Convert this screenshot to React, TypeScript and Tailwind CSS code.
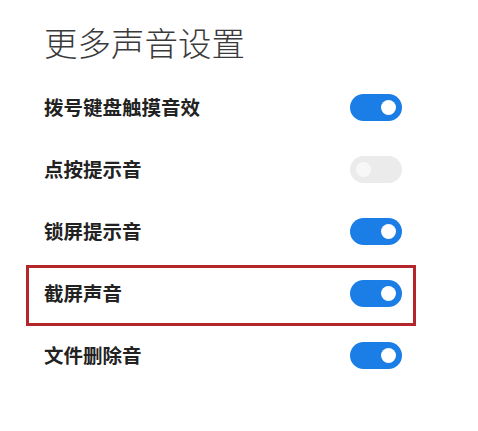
const rows = [
  { label: "拨号键盘触摸音效", on: true },
  { label: "点按提示音", on: false },
  { label: "锁屏提示音", on: true },
  { label: "截屏声音", on: true, marked: true },
  { label: "文件删除音", on: true },
];

function Toggle({ on }: { on: boolean }) {
  return (
    <div
      className={
        on
          ? "flex h-[27px] w-[52px] items-center justify-end rounded-full bg-[#1a7ee6] px-[6px]"
          : "flex h-[27px] w-[52px] items-center justify-start rounded-full bg-[#ebebeb] px-[6px]"
      }
    >
      <div className={on ? "h-[15px] w-[15px] rounded-full bg-white" : "h-[15px] w-[15px] rounded-full bg-[#f7f7f7]"} />
    </div>
  );
}

export default function App() {
  return (
    <div
      className="h-[431px] w-[478px] bg-white pl-[44px] pr-[76px] pt-[22px]"
      style={{ fontFamily: '"Noto Sans CJK SC", "Noto Sans", sans-serif' }}
    >
      <h1 className="h-[54px] text-[33.5px] font-light leading-[40px] text-[#3a3a3a]">更多声音设置</h1>
      <div className="flex flex-col">
        {rows.map((r) => (
          <div key={r.label} className="relative flex h-[62px] items-center justify-between">
            <span className="text-[19.5px] font-bold text-[#222]">{r.label}</span>
            <Toggle on={r.on} />
            {r.marked && (
              <div className="pointer-events-none absolute -left-[18px] -right-[14px] top-[3px] bottom-[-2px] border-[3px] border-[#b3262b]" />
            )}
          </div>
        ))}
      </div>
    </div>
  );
}
